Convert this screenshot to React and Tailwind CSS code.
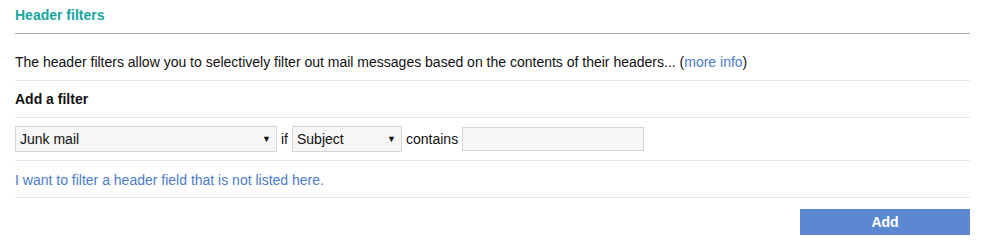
import React from "react";

function Select({ value, width }) {
  return (
    <span className={`relative inline-block align-middle ${width}`}>
      <select
        defaultValue={value}
        className="block h-[26px] w-full appearance-none rounded-none border border-[#d6d6d6] bg-[#f6f6f6] pl-[4px] pr-5 text-[14px] leading-[24px] text-[#111] outline-none"
      >
        <option>{value}</option>
      </select>
      <span className="pointer-events-none absolute right-[6px] top-[6px] text-[9px] leading-[14px] text-[#111]">
        ▼
      </span>
    </span>
  );
}

export default function App() {
  return (
    <div className="w-[1000px] h-[240px] bg-white px-[15px] font-['Liberation_Sans',Arial,sans-serif] text-[14px] text-[#111]">
      <div className="w-[955px]">
        {/* heading */}
        <h2 className="border-b border-[#aaa] pt-[5px] pb-[8px] text-[14px] font-bold leading-[20px] text-[#17a7a1]">
          Header filters
        </h2>

        <div className="border-b border-[#e8e8e8] pt-[18px] pb-[8px] leading-[20px]">
          The header filters allow you to selectively filter out mail messages based on the
          contents of their headers... (
          <a href="#" className="text-[#4a7cc9]">
            more info
          </a>
          )
        </div>

        <div className="border-b border-[#e8e8e8] py-[8px] font-bold leading-[20px]">Add a filter</div>

        {/* filter row */}
        <div className="flex items-center border-b border-[#e8e8e8] py-[8px]">
          <Select value="Junk mail" width="w-[262px]" />
          <span className="px-[4px]">if</span>
          <Select value="Subject" width="w-[110px]" />
          <span className="px-[4px]">contains</span>
          <input
            type="text"
            className="h-[24px] w-[182px] border border-[#d6d6d6] bg-[#f6f6f6] px-1 text-[14px] outline-none"
          />
        </div>

        <div className="border-b border-[#e8e8e8] pt-[9px] pb-[7px] leading-[20px]">
          <a href="#" className="text-[#4a7cc9]">
            I want to filter a header field that is not listed here.
          </a>
        </div>

        <div className="flex justify-end pt-[11px]">
          <button className="h-[26px] w-[170px] bg-[#5b88d0] text-[14px] font-bold text-white">Add</button>
        </div>
      </div>
    </div>
  );
}
